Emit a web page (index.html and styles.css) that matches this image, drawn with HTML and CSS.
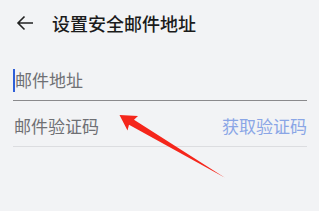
FILE: index.html
```html
<!DOCTYPE html>
<html>
  <head>
    <meta charset="UTF-8" />
    <title>设置安全邮件地址</title>
    <link rel="stylesheet" href="styles.css">
  </head>

  <body>
    <div class="header">
      <svg class="back" width="18" height="16" viewBox="0 0 18 16">
        <path d="M17 8H2M8.5 1.5L2 8l6.5 6.5" fill="none" stroke="#222" stroke-width="1.6" />
      </svg>
      <h1>设置安全邮件地址</h1>
    </div>
    <div class="form">
      <div class="row row-email">
        <span class="caret"></span><span class="placeholder">邮件地址</span>
      </div>
      <div class="row row-code">
        <span class="placeholder">邮件验证码</span>
        <span class="get-code">获取验证码</span>
      </div>
    </div>
    <svg class="pointer" width="319" height="211" viewBox="0 0 319 211">
      <polygon points="119.5,115 138,116 134,119.8 225,177.8 129,124.8 127.5,130.5" fill="#f5261b" />
    </svg>
  </body>
</html>
```

FILE: styles.css
```css
body {
  margin: 0;
  padding: 0;
  background-color: #f2f3f5;
  font-family: "Noto Sans CJK SC", "Noto Sans", sans-serif;
}

.header {
  display: flex;
  align-items: center;
  height: 46px;
  padding-left: 16px;
}

.header h1 {
  margin: 0 0 0 18px;
  font-size: 18px;
  font-weight: 500;
  color: #1b1b1b;
  line-height: 24px;
}

.form {
  padding: 0 12px 0 13px;
}

.row {
  display: flex;
  align-items: center;
  line-height: 24px;
  font-size: 17px;
}

.row-email {
  padding: 22px 0 8px;
  border-bottom: 1px solid #8a8a8c;
}

.row-code {
  padding: 13px 0 8px;
  border-bottom: 1px solid #dcdde0;
  justify-content: space-between;
}

.caret {
  display: inline-block;
  width: 2px;
  height: 23px;
  background-color: #2f5fd8;
}

.placeholder {
  color: #6f7074;
}

.row-code .placeholder {
  padding-left: 1px;
}

.get-code {
  color: #8aa6e6;
}

.pointer {
  position: absolute;
  left: 0;
  top: 0;
}
```
